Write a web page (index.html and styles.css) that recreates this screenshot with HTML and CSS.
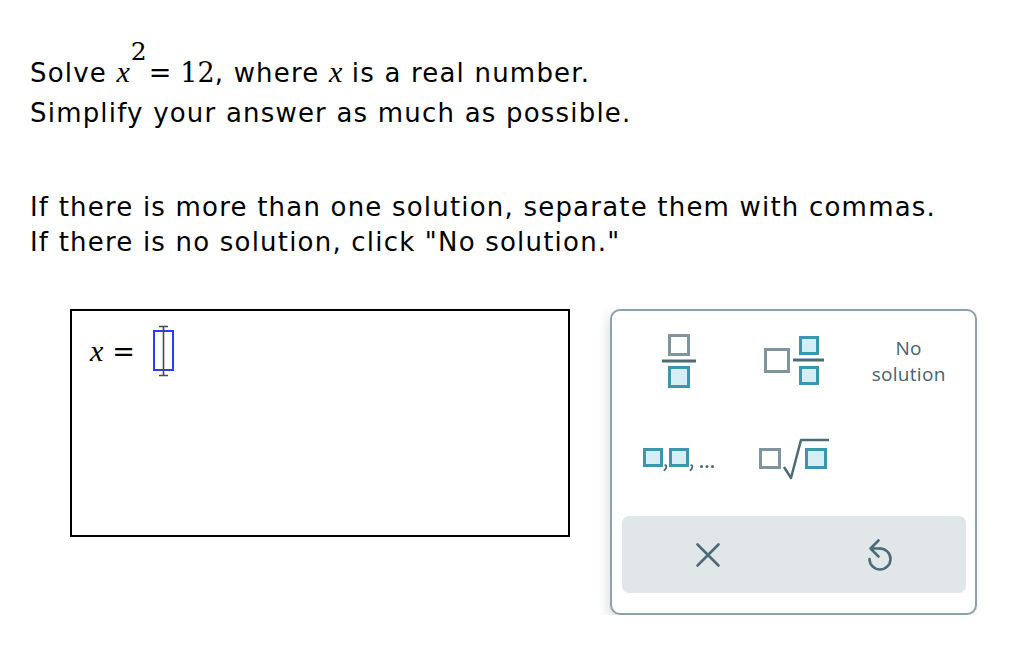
FILE: index.html
```html
<!DOCTYPE html>
<html lang="en">
<head>
<meta charset="utf-8">
<title>Solve x^2 = 12</title>
<link rel="stylesheet" href="styles.css">
</head>
<body>
<div class="question">
  <div class="line l1">Solve <span class="m"><span class="mi">x</span><span class="sup">2</span><span class="op">=</span>12</span>, where <span class="mi">x</span> is a real number.</div>
  <div class="line">Simplify your answer as much as possible.</div>
  <div class="line gap">If there is more than one solution, separate them with commas.</div>
  <div class="line">If there is no solution, click "No solution."</div>
</div>

<div class="work">
  <div class="answer">
    <div class="eq">
      <span class="mi var">x</span>
      <span class="m eqsign">=</span>
      <svg class="cursor" width="26" height="52" viewBox="0 0 26 52">
        <rect x="3" y="6" width="19" height="39" fill="none" stroke="#2b3cf6" stroke-width="2"/>
        <path d="M12.5 1.5V50.5M8 1.5H17M8 50.5H17" stroke="#4a4a4a" stroke-width="1.6" fill="none"/>
      </svg>
    </div>
  </div>

  <div class="pad">
    <div class="key">
      <svg width="38" height="58" viewBox="0 0 38 58">
        <rect x="9.5" y="3.5" width="19" height="19" fill="#fff" stroke="#7e959d" stroke-width="3"/>
        <path d="M2 29H36" stroke="#4c6b77" stroke-width="3"/>
        <rect x="9.5" y="35.5" width="19" height="19" fill="#d6edf3" stroke="#3d96b0" stroke-width="3"/>
      </svg>
    </div>
    <div class="key">
      <svg width="64" height="54" viewBox="0 0 64 54">
        <rect x="3.5" y="15.5" width="23" height="22" fill="#fff" stroke="#7e959d" stroke-width="3"/>
        <rect x="38.5" y="3.5" width="17" height="16" fill="#d6edf3" stroke="#3d96b0" stroke-width="3"/>
        <path d="M31 26H62" stroke="#4c6b77" stroke-width="3"/>
        <rect x="38.5" y="33.5" width="17" height="16" fill="#d6edf3" stroke="#3d96b0" stroke-width="3"/>
      </svg>
    </div>
    <div class="key nosol">No<br>solution</div>

    <div class="key">
      <svg width="76" height="30" viewBox="0 0 76 30">
        <rect x="3.5" y="5.5" width="17" height="16" fill="#d6edf3" stroke="#3d96b0" stroke-width="3"/>
        <rect x="29.5" y="5.5" width="17" height="16" fill="#d6edf3" stroke="#3d96b0" stroke-width="3"/>
        <path d="M24.2 21.2q1.2 0 1.2 1.4q0 2.2-2 3.6" fill="none" stroke="#4c6b77" stroke-width="1.8" stroke-linecap="round"/>
        <path d="M50.2 21.2q1.2 0 1.2 1.4q0 2.2-2 3.6" fill="none" stroke="#4c6b77" stroke-width="1.8" stroke-linecap="round"/>
        <circle cx="60.5" cy="22.5" r="1.5" fill="#4c6b77"/>
        <circle cx="66" cy="22.5" r="1.5" fill="#4c6b77"/>
        <circle cx="71.5" cy="22.5" r="1.5" fill="#4c6b77"/>
      </svg>
    </div>
    <div class="key">
      <svg width="74" height="46" viewBox="0 0 74 46">
        <rect x="3.5" y="13.5" width="19" height="18" fill="#fff" stroke="#7e959d" stroke-width="3"/>
        <path d="M27 31L34 42L44 4H72" fill="none" stroke="#4c6b77" stroke-width="2.5" stroke-linejoin="round"/>
        <rect x="49.5" y="13.5" width="19" height="18" fill="#d6edf3" stroke="#3d96b0" stroke-width="3"/>
      </svg>
    </div>
    <div class="key"></div>

    <div class="bar">
      <svg width="28" height="28" viewBox="0 0 28 28">
        <path d="M3.5 3.5L24.5 24.5M24.5 3.5L3.5 24.5" stroke="#4c6b77" stroke-width="2.6" stroke-linecap="round"/>
      </svg>
      <svg width="30" height="36" viewBox="0 0 30 36">
        <path d="M15 11.5A10.5 10.5 0 1 1 4.5 22" fill="none" stroke="#4c6b77" stroke-width="2.6" stroke-linecap="round"/>
        <path d="M13.5 3.5L5.5 11.5L13.5 19.5M5.5 11.5H15" fill="none" stroke="#4c6b77" stroke-width="2.6" stroke-linecap="round" stroke-linejoin="round"/>
      </svg>
    </div>
  </div>
</div>
</body>
</html>
```

FILE: styles.css
```css
body {
  margin: 0;
  background: #fff;
  color: #000;
  font-family: "DejaVu Sans", Verdana, sans-serif;
}

.question {
  padding: 56px 0 0 30px;
}

.line {
  font-size: 26px;
  line-height: 35px;
  letter-spacing: 1.2px;
  white-space: nowrap;
}

.l1 {
  height: 40px;
}

.gap {
  margin-top: 59px;
}

.m {
  font-family: "DejaVu Serif", "Liberation Serif", serif;
  font-size: 27px;
  line-height: 1;
  letter-spacing: 0;
}

.mi {
  font-family: "Liberation Serif", "Times New Roman", serif;
  font-style: italic;
  font-size: 30px;
  line-height: 1;
  letter-spacing: 0;
}

.sup {
  position: relative;
  top: -22px;
  margin-left: 1px;
  font-size: 25px;
}

.op {
  margin: 0 9px 0 2px;
}

.work {
  display: flex;
  align-items: flex-start;
  gap: 40px;
  margin: 49px 0 0 70px;
}

.answer {
  width: 500px;
  height: 228px;
  box-sizing: border-box;
  border: 2px solid #000;
}

.eq {
  display: flex;
  align-items: center;
  padding: 14px 0 0 18px;
  line-height: 30px;
}

.eqsign {
  margin-left: 9px;
}

.cursor {
  margin-left: 16px;
  display: block;
}

.pad {
  width: 367px;
  height: 306px;
  box-sizing: border-box;
  border: 2px solid #8da1a8;
  border-radius: 10px;
  padding: 0 9px 10px 10px;
  display: grid;
  grid-template-columns: repeat(3, 1fr);
  grid-template-rows: 100px 95px 87px;
  box-shadow: -3px 4px 10px rgba(40, 60, 70, 0.14);
  background: #fff;
}

.key {
  display: flex;
  align-items: center;
  justify-content: center;
}

.key svg {
  display: block;
}

.nosol {
  font-family: "Open Sans", "Noto Sans", sans-serif;
  font-size: 19px;
  line-height: 26px;
  letter-spacing: 0.3px;
  color: #48626e;
  text-align: center;
}

.bar {
  grid-column: 1 / -1;
  margin-top: 10px;
  background: #e1e6e9;
  border-radius: 7px;
  display: grid;
  grid-template-columns: 1fr 1fr;
  align-items: center;
  justify-items: center;
}

.bar svg {
  display: block;
}
```
